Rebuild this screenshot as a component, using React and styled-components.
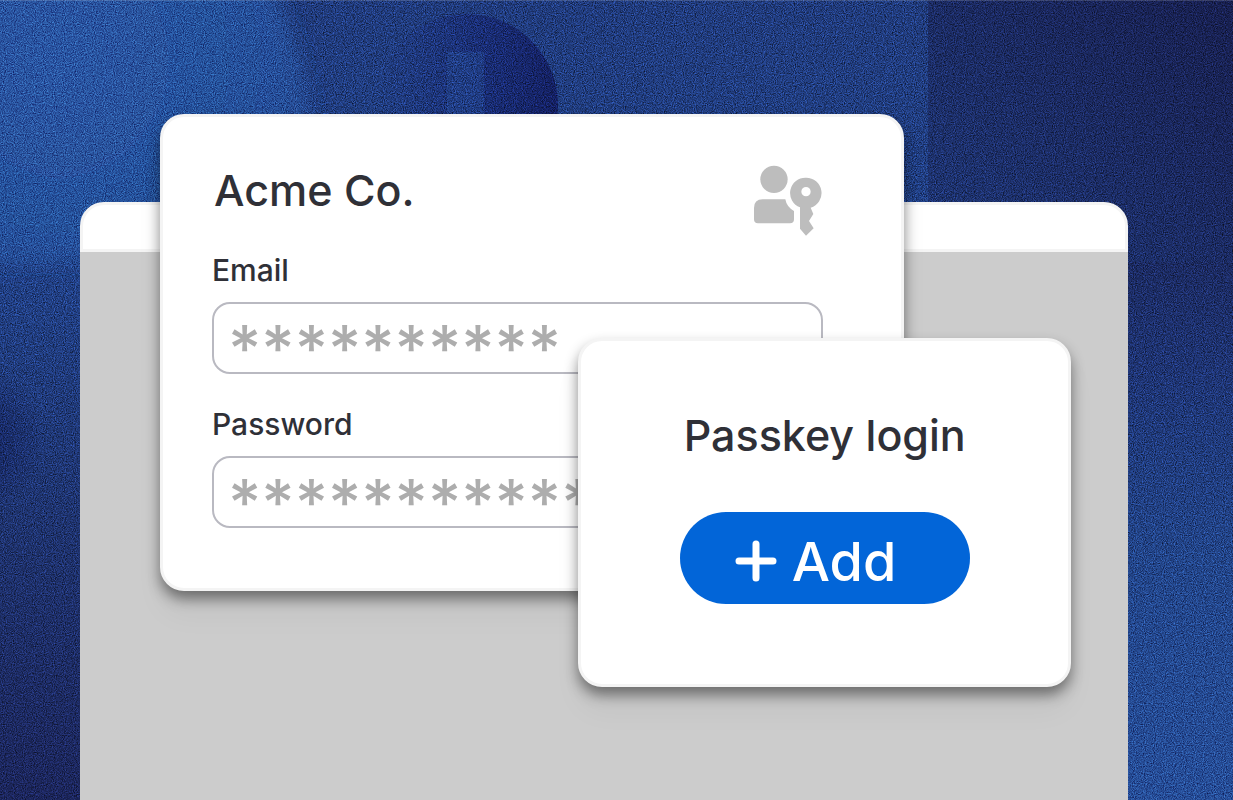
import styled, { createGlobalStyle } from "styled-components"

const App = () => {
	return (
		<>
			<GlobalStyle />
			<Stage>
				<Backdrop />
				<BrowserWindow>
					<WindowBar />
					<WindowBody />
					<LoginCard>
						<CardHeader>
							<Title>Acme Co.</Title>
							<UserKeyIcon />
						</CardHeader>
						<Field>
							<Label htmlFor="email">Email</Label>
							<Input id="email" type="text" defaultValue="**********" />
						</Field>
						<Field>
							<Label htmlFor="password">Password</Label>
							<Input id="password" type="text" defaultValue="***********" />
						</Field>
					</LoginCard>
					<PasskeyCard>
						<Title>Passkey login</Title>
						<AddButton type="button">
							<PlusIcon />
							Add
						</AddButton>
					</PasskeyCard>
				</BrowserWindow>
			</Stage>
		</>
	)
}

const Backdrop = () => (
	<BackdropSvg viewBox="0 0 1233 800" preserveAspectRatio="xMidYMid slice" aria-hidden="true">
		<defs>
			<linearGradient id="base" x1="0" y1="0" x2="0" y2="1">
				<stop offset="0" stopColor="#213c7e" />
				<stop offset="0.33" stopColor="#224288" />
				<stop offset="0.65" stopColor="#1f3470" />
				<stop offset="1" stopColor="#1c265d" />
			</linearGradient>
			<radialGradient id="glow" gradientUnits="userSpaceOnUse" cx="60" cy="60" r="360">
				<stop offset="0" stopColor="#2a57a4" />
				<stop offset="0.6" stopColor="#27509a" />
				<stop offset="1" stopColor="#23468c" />
			</radialGradient>
			<linearGradient id="right" x1="0" y1="0" x2="0" y2="1">
				<stop offset="0" stopColor="#1c2b63" />
				<stop offset="0.2" stopColor="#1f3575" />
				<stop offset="0.55" stopColor="#23468b" />
				<stop offset="1" stopColor="#274f9a" />
			</linearGradient>
			<linearGradient id="corner" x1="0" y1="1" x2="1" y2="0">
				<stop offset="0" stopColor="#1f3777" />
				<stop offset="1" stopColor="#182051" />
			</linearGradient>
			<linearGradient id="disc" x1="0" y1="0" x2="1" y2="0">
				<stop offset="0" stopColor="#1a2f7a" stopOpacity="0" />
				<stop offset="0.6" stopColor="#182a73" stopOpacity="0.8" />
				<stop offset="1" stopColor="#142062" />
			</linearGradient>
			<radialGradient id="shade" gradientUnits="userSpaceOnUse" cx="-30" cy="440" r="75">
				<stop offset="0" stopColor="#14225e" />
				<stop offset="1" stopColor="#14225e" stopOpacity="0" />
			</radialGradient>
			<filter id="soften">
				<feGaussianBlur stdDeviation="9" />
			</filter>
			<filter id="grain" x="0" y="0" width="100%" height="100%" colorInterpolationFilters="sRGB">
				<feTurbulence type="fractalNoise" baseFrequency="0.9" numOctaves="2" seed="4" />
				<feColorMatrix values="0.9 0 0 0 0.04  0.9 0 0 0 0.04  0.9 0 0 0 0.04  0 0 0 0 1" />
			</filter>
		</defs>
		<rect width="1233" height="800" fill="url(#base)" />
		<path d="M-40-40h300q50 100 50 170v132H-40z" fill="url(#glow)" filter="url(#soften)" />
		<rect x="928" y="262" width="305" height="538" fill="url(#right)" />
		<rect x="928" width="305" height="262" fill="url(#corner)" />
		<circle cx="467" cy="105" r="91" fill="url(#disc)" />
		<rect x="447" y="52" width="37" height="70" fill="#24468e" opacity="0.6" />
		<rect y="340" width="90" height="180" fill="url(#shade)" />
		<Grain width="1233" height="800" filter="url(#grain)" />
		<rect width="1233" height="1" fill="#ffffff" opacity="0.15" />
	</BackdropSvg>
)

const UserKeyIcon = () => (
	<KeySvg viewBox="0 0 204 213" aria-hidden="true">
		<circle cx="60" cy="43" r="41" />
		<path d="M26 103H94Q98 126 120 138V163Q120 175 108 175H12Q0 175 0 163V129Q0 103 26 103Z" />
		<path
			fillRule="evenodd"
			d="M156 38a46 46 0 0 1 14 90l8 19-13 21 14 22-23 22-18-21V127a46 46 0 0 1 18-89zm0 28a14 14 0 1 0 0 28 14 14 0 0 0 0-28z"
		/>
	</KeySvg>
)

const PlusIcon = () => (
	<PlusSvg viewBox="0 0 42 42" aria-hidden="true">
		<path d="M21 4v34M4 21h34" />
	</PlusSvg>
)

const GlobalStyle = createGlobalStyle`
	* {
		box-sizing: border-box;
	}

	body {
		margin: 0;
		font-family: Inter, "Liberation Sans", sans-serif;
		color: #2f3037;
	}
`

const Stage = styled.main`
	position: relative;
	display: flex;
	min-height: 100vh;
	padding: 202px 105px 0 80px;
	overflow: hidden;
	background: #1f3c80;
`

const BackdropSvg = styled.svg`
	position: absolute;
	inset: 0;
	width: 100%;
	height: 100%;
	isolation: isolate;
`

const Grain = styled.rect`
	mix-blend-mode: overlay;
`

const BrowserWindow = styled.div`
	position: relative;
	flex: 1;
	display: flex;
	flex-direction: column;
`

const WindowBar = styled.div`
	height: 50px;
	border: 3px solid #f4f4f4;
	border-radius: 24px 24px 0 0;
	background: #ffffff;
`

const WindowBody = styled.div`
	flex: 1;
	background: #cccccc;
`

const Card = styled.section`
	position: absolute;
	display: flex;
	flex-direction: column;
	border: 3px solid #f4f4f4;
	border-radius: 24px;
	background: #ffffff;
	box-shadow:
		0 8px 14px rgba(0, 0, 0, 0.45),
		0 24px 30px rgba(0, 0, 0, 0.04);
`

const LoginCard = styled(Card)`
	top: -88px;
	left: 80px;
	width: 71%;
	padding: 48px 78px 60px 49px;
	gap: 32px;
`

const PasskeyCard = styled(Card)`
	top: 136px;
	right: 57px;
	width: 47%;
	align-items: center;
	padding: 69px 0 80px;
	gap: 52px;
`

const CardHeader = styled.header`
	display: flex;
	justify-content: space-between;
	height: 55px;
	padding: 0 1px 0 2px;
`

const Title = styled.h1`
	margin: 0;
	font-size: 43px;
	font-weight: 500;
	line-height: 50px;
`

const KeySvg = styled.svg`
	width: 68px;
	height: 71px;
	fill: #bdbdbd;
`

const Field = styled.div`
	display: flex;
	flex-direction: column;
	gap: 14px;
`

const Label = styled.label`
	font-size: 30px;
	font-weight: 500;
	line-height: 36px;
`

const Input = styled.input`
	width: 100%;
	height: 72px;
	padding: 20px 14px 0;
	border: 2px solid #b9b9c1;
	border-radius: 18px;
	background: transparent;
	font-family: Inter, "Liberation Sans", sans-serif;
	font-size: 64px;
	font-weight: 500;
	color: #adadad;
	outline: none;
`

const AddButton = styled.button`
	display: flex;
	align-items: center;
	gap: 15px;
	width: 290px;
	height: 92px;
	padding: 6px 55px 0;
	border: 0;
	border-radius: 46px;
	background: #0265d8;
	font-family: Inter, "Liberation Sans", sans-serif;
	font-size: 54px;
	font-weight: 500;
	color: #ffffff;
	cursor: pointer;
`

const PlusSvg = styled.svg`
	width: 42px;
	height: 42px;
	fill: none;
	stroke: #ffffff;
	stroke-width: 7;
	stroke-linecap: round;
`

export default App
